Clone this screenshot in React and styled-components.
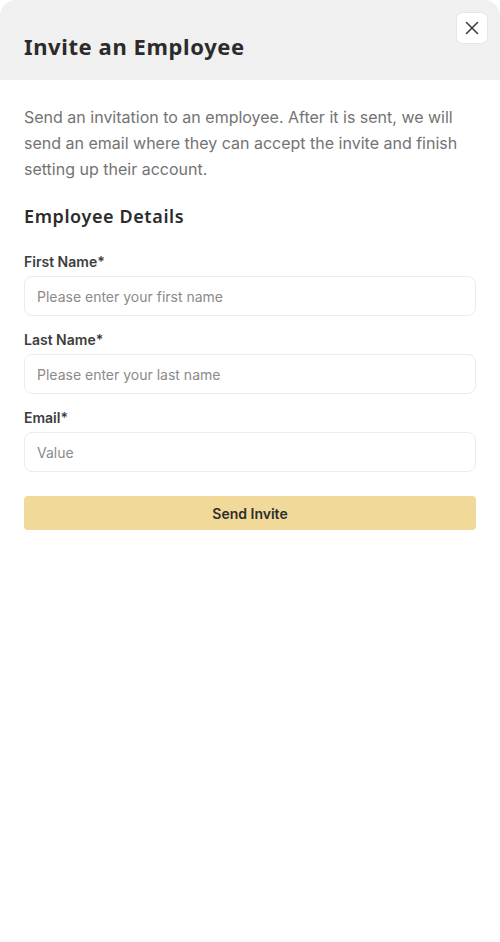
import React from "react";
import styled, { createGlobalStyle } from "styled-components";

const GlobalStyle = createGlobalStyle`
  * { box-sizing: border-box; }
  body {
    margin: 0;
    background: #ffffff;
    font-family: Inter, "Liberation Sans", sans-serif;
  }
`;

const Panel = styled.div`
  width: 500px;
  min-height: 942px;
  background: #ffffff;
  border-radius: 16px 16px 0 0;
  overflow: hidden;
`;

const Header = styled.header`
  position: relative;
  height: 80px;
  background: #f0f0f0;
  display: flex;
  align-items: center;
  padding: 12px 24px 0;
`;

const Title = styled.h1`
  margin: 0;
  font-family: "Noto Sans", "Open Sans", sans-serif;
  font-size: 22px;
  font-weight: 700;
  color: #2b2b2b;
  letter-spacing: 0.6px;
`;

const CloseButton = styled.button`
  position: absolute;
  top: 12px;
  right: 12px;
  width: 32px;
  height: 32px;
  border: 1px solid #e6e6e6;
  border-radius: 7px;
  background: #ffffff;
  display: flex;
  align-items: center;
  justify-content: center;
  padding: 0;
  cursor: pointer;
`;

const Body = styled.div`
  padding: 24px 24px;
  display: flex;
  flex-direction: column;
`;

const Intro = styled.p`
  margin: 0;
  font-size: 16px;
  line-height: 26px;
  color: #737373;
`;

const SectionTitle = styled.h2`
  margin: 21px 0 0;
  font-family: "Noto Sans", "Open Sans", sans-serif;
  font-size: 18px;
  font-weight: 600;
  color: #2b2b2b;
  line-height: 26px;
  letter-spacing: 0.6px;
`;

const Form = styled.form`
  display: flex;
  flex-direction: column;
  gap: 15px;
  margin-top: 24px;
`;

const Field = styled.label`
  display: flex;
  flex-direction: column;
  gap: 5px;
`;

const Label = styled.span`
  font-size: 14px;
  font-weight: 600;
  line-height: 18px;
  color: #3d3d3d;
`;

const Input = styled.input`
  height: 40px;
  width: 100%;
  border: 1px solid #ececec;
  border-radius: 8px;
  padding: 0 12px;
  font-family: Inter, "Liberation Sans", sans-serif;
  font-size: 14px;
  color: #333;
  outline: none;
  &::placeholder { color: #8a8a8a; }
`;

const SubmitButton = styled.button`
  margin-top: 9px;
  height: 34px;
  width: 100%;
  border: none;
  border-radius: 4px;
  background: #f0d999;
  font-family: Inter, "Liberation Sans", sans-serif;
  font-size: 14px;
  font-weight: 600;
  color: #2e2e2e;
  cursor: pointer;
`;

const fields = [
  { label: "First Name*", placeholder: "Please enter your first name" },
  { label: "Last Name*", placeholder: "Please enter your last name" },
  { label: "Email*", placeholder: "Value" },
];

export default function App() {
  return (
    <Panel>
      <GlobalStyle />
      <Header>
        <Title>Invite an Employee</Title>
        <CloseButton aria-label="Close">
          <svg width="14" height="14" viewBox="0 0 14 14" fill="none">
            <path d="M1.5 1.5L12.5 12.5M12.5 1.5L1.5 12.5" stroke="#3a3a3a" strokeWidth="1.5" strokeLinecap="round" />
          </svg>
        </CloseButton>
      </Header>
      <Body>
        <Intro>
          Send an invitation to an employee. After it is sent, we will send an email where they can accept the invite and finish setting up their account.
        </Intro>
        <SectionTitle>Employee Details</SectionTitle>
        <Form onSubmit={(e) => e.preventDefault()}>
          {fields.map((f) => (
            <Field key={f.label}>
              <Label>{f.label}</Label>
              <Input placeholder={f.placeholder} />
            </Field>
          ))}
          <SubmitButton type="submit">Send Invite</SubmitButton>
        </Form>
      </Body>
    </Panel>
  );
}
